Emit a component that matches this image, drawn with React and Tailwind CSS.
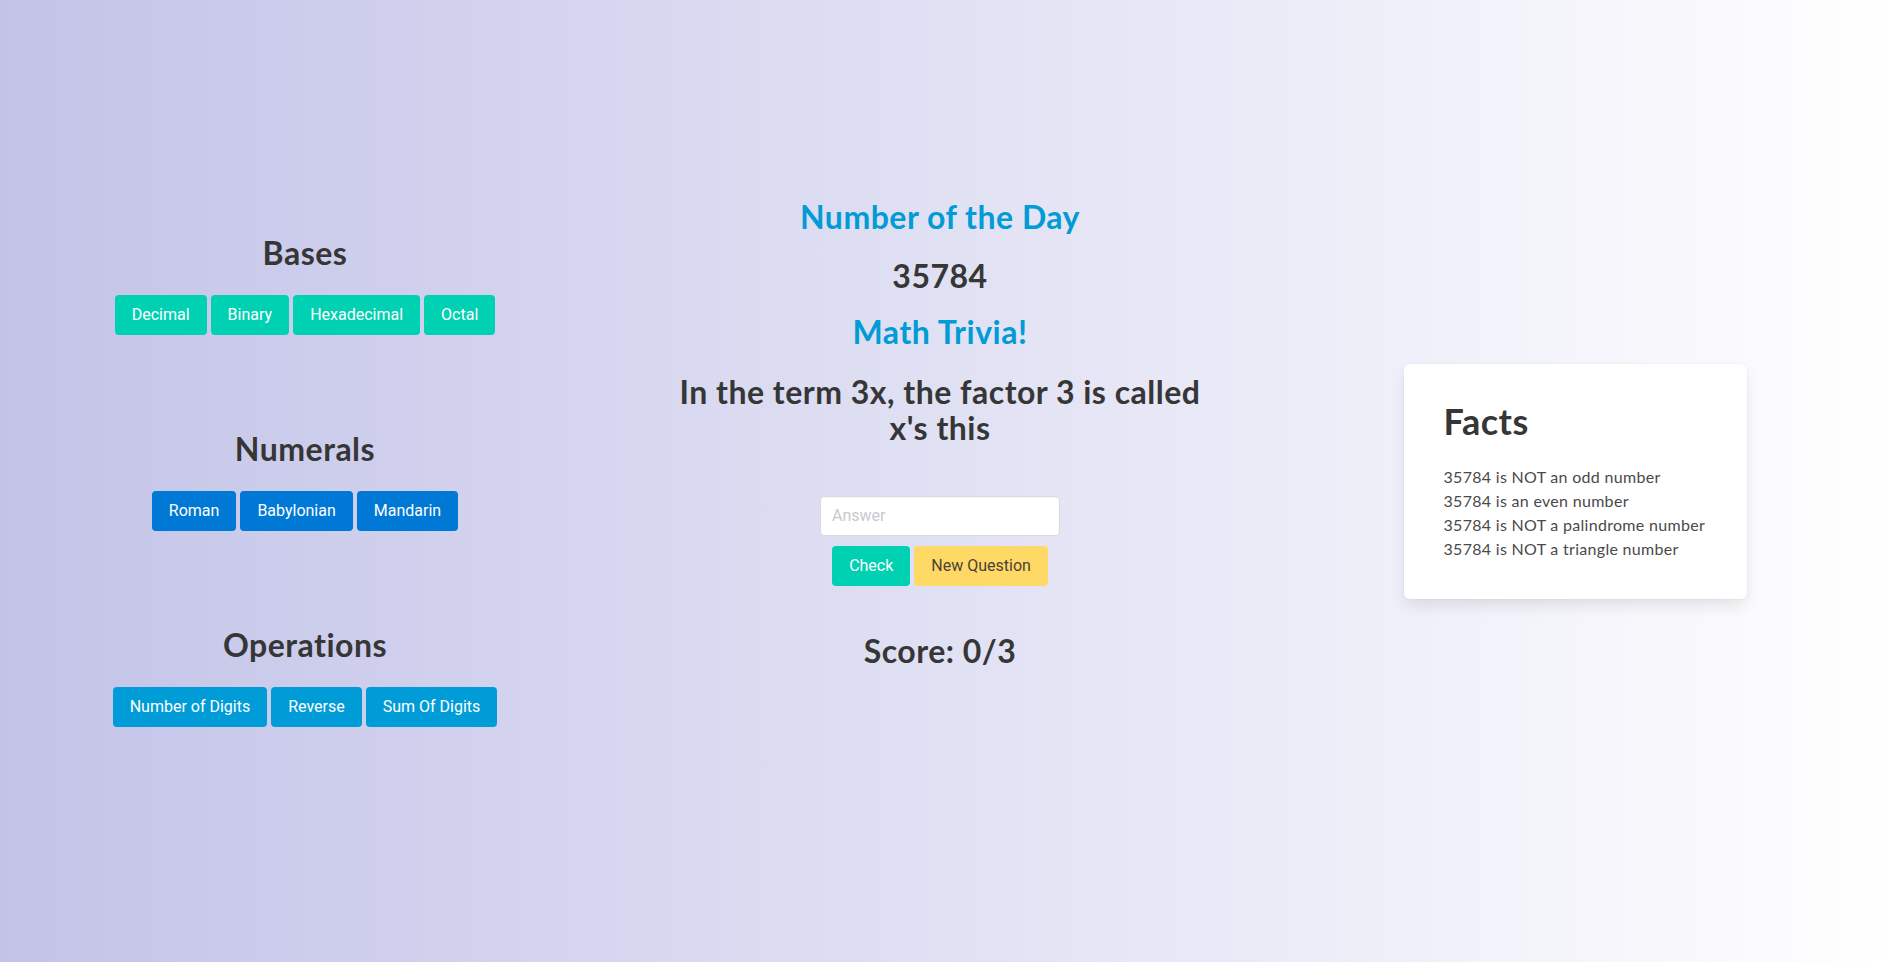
import React from 'react'

/* Math dashboard — bases / numerals / operations, number of the day, facts */

const HEAD = { fontFamily: 'Lato, "Open Sans", sans-serif' }
const BTN = { fontFamily: 'Roboto, "Liberation Sans", sans-serif' }

const SECTIONS = [
  { title: 'Bases', color: 'bg-[#00d1b2]', items: ['Decimal', 'Binary', 'Hexadecimal', 'Octal'] },
  { title: 'Numerals', color: 'bg-[#0078d6]', items: ['Roman', 'Babylonian', 'Mandarin'] },
  { title: 'Operations', color: 'bg-[#009cd8]', items: ['Number of Digits', 'Reverse', 'Sum Of Digits'] },
]

const FACTS = [
  '35784 is NOT an odd number',
  '35784 is an even number',
  '35784 is NOT a palindrome number',
  '35784 is NOT a triangle number',
]

function Btn({ className = '', children }) {
  return (
    <button
      style={BTN}
      className={`h-10 px-[17px] rounded-[4px] text-base leading-6 whitespace-nowrap ${className}`}
    >
      {children}
    </button>
  )
}

function Section({ title, color, items }) {
  return (
    <div className="flex flex-col items-center">
      <h2 style={HEAD} className="text-[32px] leading-[36px] tracking-[0.5px] font-bold text-[#363636] mb-6">{title}</h2>
      <div className="flex gap-1">
        {items.map(it => (
          <Btn key={it} className={`${color} text-white`}>{it}</Btn>
        ))}
      </div>
    </div>
  )
}

export default function App() {
  return (
    <div className="h-[962px] w-full overflow-hidden bg-linear-to-r from-[#c3c3e8] to-white grid grid-cols-[610px_660px_610px] items-center">
      {/* left: tools */}
      <div className="flex flex-col gap-[96px]">
        {SECTIONS.map(s => <Section key={s.title} {...s} />)}
      </div>

      {/* middle: number of the day + trivia */}
      <div className="flex flex-col items-center text-center pb-[95px] tracking-[0.5px]" style={HEAD}>
        <h1 className="text-[32px] leading-[36px] font-bold text-[#019bd6] mb-[23px]">Number of the Day</h1>
        <p className="text-[32px] leading-[36px] font-bold text-[#363636] mb-5">35784</p>
        <h2 className="text-[32px] leading-[36px] font-bold text-[#019bd6] mb-6">Math Trivia!</h2>
        <p className="text-[32px] leading-[36px] font-bold text-[#363636] w-[540px] mb-[50px]">
          In the term 3x, the factor 3 is called x's this
        </p>
        <input
          placeholder="Answer"
          style={BTN}
          className="w-[240px] h-10 px-[11px] rounded-[4px] bg-white border border-[#dbdbdb] text-base tracking-normal text-[#363636] placeholder:text-[#c9c9cf] shadow-[inset_0_1px_2px_rgba(10,10,10,0.05)] outline-none mb-[10px]"
        />
        <div className="flex gap-1 mb-[47px] tracking-normal">
          <Btn className="bg-[#00d1b2] text-white">Check</Btn>
          <Btn className="bg-[#ffd966] text-[#4a4236]">New Question</Btn>
        </div>
        <h2 className="text-[32px] leading-[36px] font-bold text-[#363636]">Score: 0/3</h2>
      </div>

      {/* right: facts card */}
      <div className="flex justify-center">
        <div className="w-[343px] bg-white rounded-[6px] pt-[37px] pb-[38px] px-10 shadow-[0_8px_16px_-2px_rgba(10,10,10,0.1),0_0_0_1px_rgba(10,10,10,0.02)]">
          <h2 style={HEAD} className="text-[36px] leading-10 tracking-[0.5px] font-bold text-[#363636] mb-6">Facts</h2>
          <ul style={HEAD} className="text-base leading-6 tracking-[0.3px] text-[#4a4a4a]">
            {FACTS.map(f => <li key={f}>{f}</li>)}
          </ul>
        </div>
      </div>
    </div>
  )
}
